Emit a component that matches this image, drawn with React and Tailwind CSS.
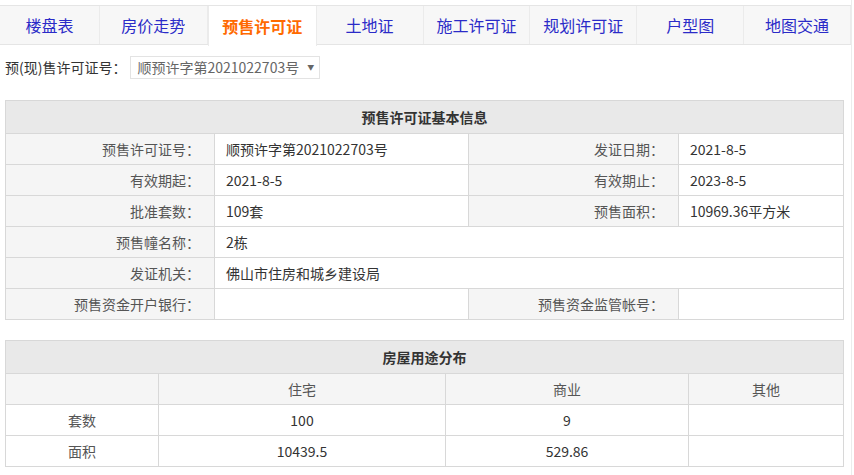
import React from 'react';

const tabs = ['楼盘表', '房价走势', '预售许可证', '土地证', '施工许可证', '规划许可证', '户型图', '地图交通'];
const tabWidths = ['w-[100px]', 'w-[108px]', 'w-[109px]', 'w-[107px]', 'w-[107px]', 'w-[107px]', 'w-[107px]', 'w-[107px]'];

const font = { fontFamily: '"Noto Sans CJK SC", "Noto Sans", sans-serif' };

const Label = ({ children }) => (
    <td className="bg-[#f5f5f5] border border-[#d8d8d8] text-right pr-[14px] text-[#555]">{children}：</td>
);
const Value = ({ children, span }) => (
    <td colSpan={span} className="bg-white border border-[#d8d8d8] pl-[11px] text-[#333]">{children}</td>
);

export default function App() {
    return (
        <div className="w-[852px] h-[475px] bg-white border-r border-[#ececec] text-[14px] overflow-hidden" style={font}>
            <div className="flex mt-[5px] border-t border-b border-[#e5e5e5] bg-[#f7f7f7] h-[40px]">
                {tabs.map((t, i) => (
                    <div key={t} className={`${tabWidths[i]} flex items-center justify-center text-[16px] border-r border-[#ebebeb] ${i === 2 ? 'bg-white text-[#ff6a00] font-bold h-[40px] border-l' : 'text-[#2b2bc8]'}`}>
                        {t}
                    </div>
                ))}
            </div>

            <div className="flex items-center h-[25px] mt-[10px] pl-[5px] text-[#333]">
                <span>预(现)售许可证号：</span>
                <div className="ml-[4px] h-[23px] w-[190px] border border-[#e3e3e3] flex items-center pl-[6px] text-[#666]">
                    顺预许字第2021022703号
                    <span className="ml-[8px] text-[7px] text-[#666]">▼</span>
                </div>
            </div>

            <table className="ml-[5px] mt-[20px] w-[838px] table-fixed border-collapse leading-none">
                <colgroup>
                    <col className="w-[209px]" />
                    <col className="w-[254px]" />
                    <col className="w-[210px]" />
                    <col className="w-[165px]" />
                </colgroup>
                <tbody>
                    <tr className="h-[33px]">
                        <td colSpan={4} className="bg-[#e9e9e9] border border-[#d8d8d8] text-center font-bold text-[#333]">预售许可证基本信息</td>
                    </tr>
                    <tr className="h-[31px]">
                        <Label>预售许可证号</Label>
                        <Value>顺预许字第2021022703号</Value>
                        <Label>发证日期</Label>
                        <Value>2021-8-5</Value>
                    </tr>
                    <tr className="h-[31px]">
                        <Label>有效期起</Label>
                        <Value>2021-8-5</Value>
                        <Label>有效期止</Label>
                        <Value>2023-8-5</Value>
                    </tr>
                    <tr className="h-[31px]">
                        <Label>批准套数</Label>
                        <Value>109套</Value>
                        <Label>预售面积</Label>
                        <Value>10969.36平方米</Value>
                    </tr>
                    <tr className="h-[31px]">
                        <Label>预售幢名称</Label>
                        <Value span={3}>2栋</Value>
                    </tr>
                    <tr className="h-[31px]">
                        <Label>发证机关</Label>
                        <Value span={3}>佛山市住房和城乡建设局</Value>
                    </tr>
                    <tr className="h-[31px]">
                        <Label>预售资金开户银行</Label>
                        <Value></Value>
                        <Label>预售资金监管帐号</Label>
                        <Value></Value>
                    </tr>
                </tbody>
            </table>

            <table className="ml-[5px] mt-[20px] w-[838px] table-fixed border-collapse leading-none text-center">
                <colgroup>
                    <col className="w-[153px]" />
                    <col className="w-[287px]" />
                    <col className="w-[243px]" />
                    <col className="w-[155px]" />
                </colgroup>
                <tbody>
                    <tr className="h-[33px]">
                        <td colSpan={4} className="bg-[#e9e9e9] border border-[#d8d8d8] font-bold text-[#333]">房屋用途分布</td>
                    </tr>
                    <tr className="h-[31px] bg-[#f5f5f5] text-[#555]">
                        <td className="border border-[#d8d8d8]"></td>
                        <td className="border border-[#d8d8d8]">住宅</td>
                        <td className="border border-[#d8d8d8]">商业</td>
                        <td className="border border-[#d8d8d8]">其他</td>
                    </tr>
                    <tr className="h-[31px] text-[#333]">
                        <td className="border border-[#d8d8d8] text-[#555]">套数</td>
                        <td className="border border-[#d8d8d8]">100</td>
                        <td className="border border-[#d8d8d8]">9</td>
                        <td className="border border-[#d8d8d8]"></td>
                    </tr>
                    <tr className="h-[31px] text-[#333]">
                        <td className="border border-[#d8d8d8] text-[#555]">面积</td>
                        <td className="border border-[#d8d8d8]">10439.5</td>
                        <td className="border border-[#d8d8d8]">529.86</td>
                        <td className="border border-[#d8d8d8]"></td>
                    </tr>
                </tbody>
            </table>
        </div>
    );
}
